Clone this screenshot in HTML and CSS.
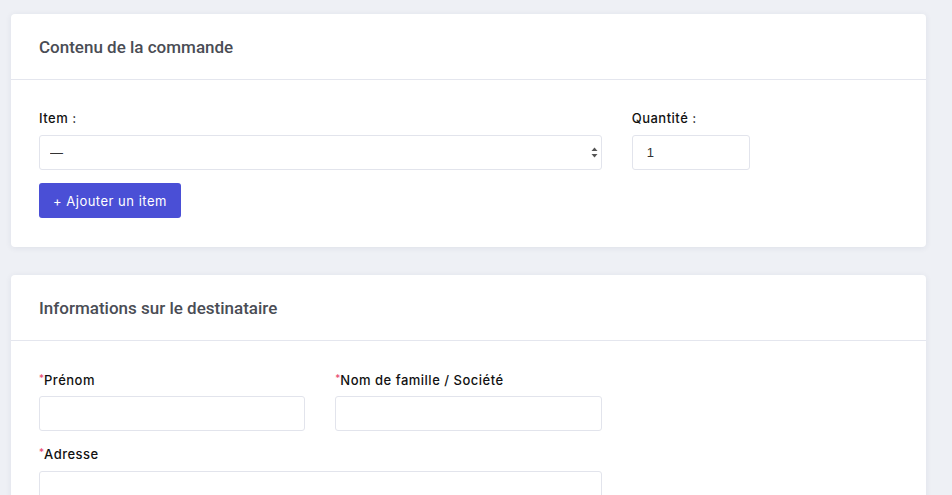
FILE: index.html
```html
<!DOCTYPE html>
<html lang="fr">
<head>
  <meta charset="UTF-8" />
  <title>Nouvelle commande</title>
  <link rel="stylesheet" href="styles.css">
</head>
<body>
  <!-- Contenu de la commande -->
  <section class="card">
    <div class="card-header">
      <h2>Contenu de la commande</h2>
    </div>
    <div class="card-body">
      <div class="row">
        <div class="field col-8">
          <label for="item">Item :</label>
          <div class="select-wrap">
            <select id="item" name="item">
              <option>—</option>
            </select>
            <svg class="arrows" width="7" height="11" viewBox="0 0 7 11">
              <path d="M3.5 0.5 L6.5 4 L0.5 4 Z" fill="#555" />
              <path d="M3.5 10.5 L6.5 7 L0.5 7 Z" fill="#555" />
            </svg>
          </div>
        </div>
        <div class="field col-2">
          <label for="qty">Quantité :</label>
          <input type="text" id="qty" name="qty" value="1" />
        </div>
      </div>
      <button type="button" class="btn-primary">+ Ajouter un item</button>
    </div>
  </section>

  <!-- Informations sur le destinataire -->
  <section class="card">
    <div class="card-header">
      <h2>Informations sur le destinataire</h2>
    </div>
    <div class="card-body card-body-lg">
      <div class="row">
        <div class="field col-4">
          <label for="firstname"><span class="req">*</span>Prénom</label>
          <input type="text" id="firstname" name="firstname" />
        </div>
        <div class="field col-4">
          <label for="lastname"><span class="req">*</span>Nom de famille / Société</label>
          <input type="text" id="lastname" name="lastname" />
        </div>
      </div>
      <div class="row">
        <div class="field col-8">
          <label for="address"><span class="req">*</span>Adresse</label>
          <input type="text" id="address" name="address" />
        </div>
      </div>
    </div>
  </section>
</body>
</html>
```

FILE: styles.css
```css
body {
  font-family: 'Liberation Sans', Arial, sans-serif;
  background: #eef0f5;
  color: #000;
  margin: 0;
  padding: 14px 26px 14px 11px;
  display: flex;
  flex-direction: column;
  gap: 28px;
}

.card {
  background: #fff;
  border-radius: 4px;
  box-shadow: 0 1px 6px rgba(40, 50, 90, 0.08);
}

.card-header {
  padding: 0 28px;
  height: 65px;
  display: flex;
  align-items: center;
  border-bottom: 1px solid #e4e6ee;
}

.card-header h2 {
  margin: 0;
  font-family: Roboto, 'Liberation Sans', sans-serif;
  font-size: 17px;
  font-weight: 500;
  color: #4a4d55;
}

.card-body {
  padding: 30px 28px 29px;
}

.card-body-lg {
  padding-top: 31px;
}

.row {
  display: grid;
  grid-template-columns: repeat(12, 1fr);
  column-gap: 30px;
  margin-bottom: 13px;
}

.card-body-lg .row {
  margin-bottom: 15px;
}

.col-2 { grid-column: span 2; }
.col-4 { grid-column: span 4; }
.col-8 { grid-column: span 8; }

label {
  display: block;
  font-family: Inter, 'Open Sans', sans-serif;
  font-size: 13px;
  font-weight: 500;
  letter-spacing: 0.5px;
  color: #111;
  margin-bottom: 8px;
  line-height: 17px;
}

.card-body-lg .row:first-child label {
  margin-bottom: 7px;
}

.req {
  color: #e8456b;
  font-size: 10px;
  font-weight: 400;
  line-height: 0;
  letter-spacing: 0;
  vertical-align: 3px;
}

input,
select {
  box-sizing: border-box;
  width: 100%;
  height: 35px;
  padding: 0 14px;
  border: 1px solid #e2e4ec;
  border-radius: 3px;
  background: #fff;
  font-family: 'Liberation Sans', Arial, sans-serif;
  font-size: 13px;
  color: #333;
  outline: none;
}

.select-wrap {
  position: relative;
}

select {
  appearance: none;
  -webkit-appearance: none;
  padding-left: 10px;
}

.arrows {
  position: absolute;
  right: 4px;
  top: 12px;
  pointer-events: none;
}

.btn-primary {
  background: #4a4fd6;
  color: #fff;
  font-family: Inter, 'Open Sans', sans-serif;
  font-size: 13px;
  font-weight: 400;
  letter-spacing: 0.5px;
  height: 35px;
  padding: 0 14px;
  border: none;
  border-radius: 3px;
  cursor: pointer;
}
```
